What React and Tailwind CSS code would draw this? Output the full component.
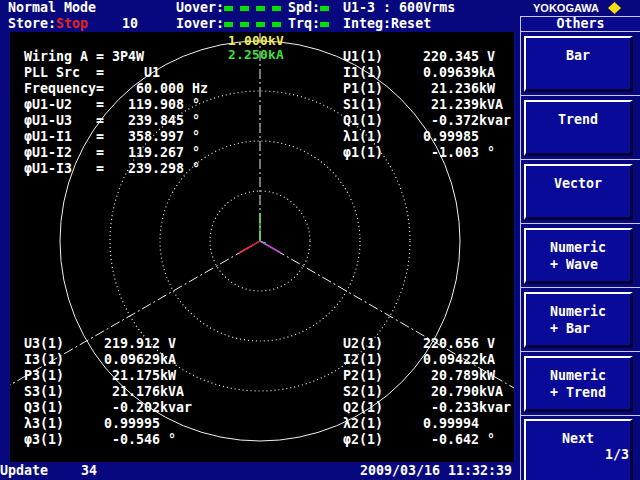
import React from "react";

const mono = { fontFamily: '"DejaVu Sans Mono", "Liberation Mono", monospace' };

const topLeft = [
  "Wiring A = 3P4W",
  "PLL Src  =     U1",
  "Frequency=    60.000 Hz",
  "φU1-U2   =   119.908 °",
  "φU1-U3   =   239.845 °",
  "φU1-I1   =   358.997 °",
  "φU1-I2   =   119.267 °",
  "φU1-I3   =   239.298 °",
];

const block = (n, v) => [
  `U${n}(1)     ${v[0]} V`,
  `I${n}(1)     ${v[1]}kA`,
  `P${n}(1)      ${v[2]}kW`,
  `S${n}(1)      ${v[3]}kVA`,
  `Q${n}(1)      ${v[4]}kvar`,
  `λ${n}(1)     ${v[5]}`,
  `φ${n}(1)      ${v[6]} °`,
];

const ch1 = block(1, ["220.345", "0.09639", "21.236", "21.239", "-0.372", "0.99985", "-1.003"]);
const ch2 = block(2, ["220.656", "0.09422", "20.789", "20.790", "-0.233", "0.99994", "-0.642"]);
const ch3 = block(3, ["219.912", "0.09629", "21.175", "21.176", "-0.202", "0.99995", "-0.546"]);

const menu = [
  ["Bar"],
  ["Trend"],
  ["Vector"],
  ["Numeric", "+ Wave"],
  ["Numeric", "+ Bar"],
  ["Numeric", "+ Trend"],
];

function Lines({ rows, className = "" }) {
  return (
    <div className={`flex flex-col ${className}`}>
      {rows.map((r, i) => (
        <div key={i} className="h-4 leading-4 whitespace-pre">
          {r}
        </div>
      ))}
    </div>
  );
}

function Lamp() {
  return <span className="inline-block w-[9px] h-[5px] bg-[#00e000]" />;
}

function VectorPlot() {
  const cx = 250;
  const cy = 209;
  return (
    <svg className="absolute inset-0" width="504" height="430" viewBox="0 0 504 430">
      <circle cx={cx} cy={cy} r="200" fill="none" stroke="#f0f0f0" strokeWidth="1" />
      {[150, 100, 50].map((r) => (
        <circle key={r} cx={cx} cy={cy} r={r} fill="none" stroke="#e8e8e8" strokeWidth="1.2" strokeDasharray="1 3" />
      ))}
      <g stroke="#f0f0f0" strokeWidth="1" strokeDasharray="10 3 2 3" fill="none">
        <line x1={cx} y1={cy} x2={cx} y2="0" />
        <line x1={cx} y1={cy} x2="0" y2="353" />
        <line x1={cx} y1={cy} x2="504" y2="356" />
      </g>
      <line x1={cx} y1={cy} x2={cx} y2={cy - 28} stroke="#50ff50" strokeWidth="1.2" />
      <line x1={cx} y1={cy} x2={cx - 21} y2={cy + 12} stroke="#ff3040" strokeWidth="1.5" />
      <line x1={cx} y1={cy} x2={cx + 21} y2={cy + 12} stroke="#c050d0" strokeWidth="1.5" />
      <line x1={cx} y1={cy} x2={cx + 6} y2={cy + 2} stroke="#40c0a0" strokeWidth="1" />
      <line x1={cx} y1={cy} x2={cx - 9} y2={cy + 5} stroke="#a02060" strokeWidth="1" />
    </svg>
  );
}

export default function App() {
  return (
    <div
      className="w-[640px] h-[480px] bg-[#08087e] text-white font-bold text-[13.3px] flex overflow-hidden"
      style={mono}
    >
      {/* left: status, plot, bottom bar */}
      <div className="w-[520px] flex flex-col">
        <div className="h-8 flex flex-col pl-2">
          <div className="h-4 leading-4 flex items-center whitespace-pre">
            <span className="w-[168px]">Normal Mode</span>
            <span>Uover:</span>
            <span className="flex gap-[7px]">
              <Lamp /><Lamp /><Lamp /><Lamp />
            </span>
            <span className="ml-[7px]">Spd:</span>
            <Lamp />
            <span className="ml-[14px]">U1-3 : 600Vrms</span>
          </div>
          <div className="h-4 leading-4 flex items-center whitespace-pre">
            <span className="w-[114px]">
              Store:<span className="text-[#e02424]">Stop</span>
            </span>
            <span className="w-[54px]">10</span>
            <span>Iover:</span>
            <span className="flex gap-[7px]">
              <Lamp /><Lamp /><Lamp /><Lamp />
            </span>
            <span className="ml-[7px]">Trq:</span>
            <Lamp />
            <span className="ml-[14px]">Integ:Reset</span>
          </div>
        </div>

        <div className="relative ml-[10px] w-[504px] h-[430px] bg-black">
          <VectorPlot />
          <div className="absolute left-[218px] top-[2px] flex flex-col gap-[1px] text-[12.8px] tracking-[0.3px] leading-[13px]">
            <div className="text-[#f0ec50]">1.000kV</div>
            <div className="text-[#40e040]">2.250kA</div>
          </div>
          <div className="relative h-full flex flex-col justify-between pt-[17px] pb-[14px] pl-[14px]">
            <div className="flex items-start">
              <Lines rows={topLeft} className="w-[319px]" />
              <Lines rows={ch1} />
            </div>
            <div className="flex items-start">
              <Lines rows={ch3} className="w-[319px]" />
              <Lines rows={ch2} />
            </div>
          </div>
        </div>

        <div className="h-[18px] leading-[18px] flex whitespace-pre pr-2">
          <span className="w-[81px]">Update</span>
          <span>34</span>
          <span className="ml-auto">2009/03/16 11:32:39</span>
        </div>
      </div>

      {/* right: soft-key menu */}
      <div className="w-[120px] flex flex-col">
        <div className="h-4 flex items-center pl-[13px]">
          <span className="text-[11px] leading-4" style={{ fontFamily: '"Liberation Sans", Arial, sans-serif' }}>
            YOKOGAWA
          </span>
          <svg className="ml-[9px]" width="13" height="12" viewBox="0 0 13 12">
            <polygon points="6.5,0 13,6 6.5,12 0,6" fill="#f8e010" />
          </svg>
        </div>
        <div className="flex-1 flex flex-col border-l border-[#c8c8f0]">
          <div className="h-4 leading-[14px] text-center border-y border-[#c8c8f0] bg-[#0a0a90]">Others</div>
          {menu.map((m, i) => (
            <div key={i} className="h-16 border-b border-[#c8c8f0] pt-[4px] pb-[3px] pl-[3px] pr-[7px]">
              <div className="h-full bg-[#0a0a98] border-t-2 border-l-2 border-white border-b-[3px] border-r-[3px] border-b-[#00003a] border-r-[#00003a] pt-[10px] flex justify-center">
                <div className="text-left">
                  {m.map((t) => (
                    <div key={t} className="h-[17px] leading-4 whitespace-pre">{t}</div>
                  ))}
                </div>
              </div>
            </div>
          ))}
          <div className="flex-1 pt-[3px] pl-[3px] pr-[7px]">
            <div className="h-full bg-[#0a0a98] border-t-2 border-l-2 border-white border-r-[3px] border-r-[#00003a] pt-[10px] flex flex-col">
              <div className="h-4 leading-4 text-center">Next</div>
              <div className="h-4 leading-4 text-right pr-[1px]">1/3</div>
            </div>
          </div>
        </div>
      </div>
    </div>
  );
}
